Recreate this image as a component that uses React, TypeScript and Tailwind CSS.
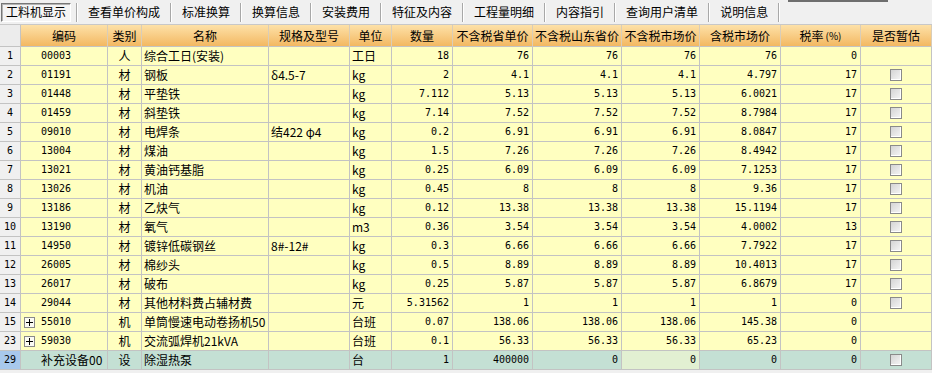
import type { ReactNode } from 'react'

type Row = {
  no: string
  code: string
  tree?: boolean
  kind: string
  name: string
  spec?: string
  unit: string
  qty: string
  p1: string
  p2: string
  p3: string
  p4: string
  rate: string
  check: boolean
  extra?: boolean
}

const tabs = ['工料机显示', '查看单价构成', '标准换算', '换算信息', '安装费用', '特征及内容', '工程量明细', '内容指引', '查询用户清单', '说明信息']

const headers = ['', '编码', '类别', '名称', '规格及型号', '单位', '数量', '不含税省单价', '不含税山东省价', '不含税市场价', '含税市场价', '税率(%)', '是否暂估']

const rows: Row[] = [
  { no: '1', code: '00003', kind: '人', name: '综合工日(安装)', unit: '工日', qty: '18', p1: '76', p2: '76', p3: '76', p4: '76', rate: '0', check: false },
  { no: '2', code: '01191', kind: '材', name: '钢板', spec: 'δ4.5-7', unit: 'kg', qty: '2', p1: '4.1', p2: '4.1', p3: '4.1', p4: '4.797', rate: '17', check: true },
  { no: '3', code: '01448', kind: '材', name: '平垫铁', unit: 'kg', qty: '7.112', p1: '5.13', p2: '5.13', p3: '5.13', p4: '6.0021', rate: '17', check: true },
  { no: '4', code: '01459', kind: '材', name: '斜垫铁', unit: 'kg', qty: '7.14', p1: '7.52', p2: '7.52', p3: '7.52', p4: '8.7984', rate: '17', check: true },
  { no: '5', code: '09010', kind: '材', name: '电焊条', spec: '结422 φ4', unit: 'kg', qty: '0.2', p1: '6.91', p2: '6.91', p3: '6.91', p4: '8.0847', rate: '17', check: true },
  { no: '6', code: '13004', kind: '材', name: '煤油', unit: 'kg', qty: '1.5', p1: '7.26', p2: '7.26', p3: '7.26', p4: '8.4942', rate: '17', check: true },
  { no: '7', code: '13021', kind: '材', name: '黄油钙基脂', unit: 'kg', qty: '0.25', p1: '6.09', p2: '6.09', p3: '6.09', p4: '7.1253', rate: '17', check: true },
  { no: '8', code: '13026', kind: '材', name: '机油', unit: 'kg', qty: '0.45', p1: '8', p2: '8', p3: '8', p4: '9.36', rate: '17', check: true },
  { no: '9', code: '13186', kind: '材', name: '乙炔气', unit: 'kg', qty: '0.12', p1: '13.38', p2: '13.38', p3: '13.38', p4: '15.1194', rate: '17', check: true },
  { no: '10', code: '13190', kind: '材', name: '氧气', unit: 'm3', qty: '0.36', p1: '3.54', p2: '3.54', p3: '3.54', p4: '4.0002', rate: '13', check: true },
  { no: '11', code: '14950', kind: '材', name: '镀锌低碳钢丝', spec: '8#-12#', unit: 'kg', qty: '0.3', p1: '6.66', p2: '6.66', p3: '6.66', p4: '7.7922', rate: '17', check: true },
  { no: '12', code: '26005', kind: '材', name: '棉纱头', unit: 'kg', qty: '0.5', p1: '8.89', p2: '8.89', p3: '8.89', p4: '10.4013', rate: '17', check: true },
  { no: '13', code: '26017', kind: '材', name: '破布', unit: 'kg', qty: '0.25', p1: '5.87', p2: '5.87', p3: '5.87', p4: '6.8679', rate: '17', check: true },
  { no: '14', code: '29044', kind: '材', name: '其他材料费占辅材费', unit: '元', qty: '5.31562', p1: '1', p2: '1', p3: '1', p4: '1', rate: '0', check: true },
  { no: '15', code: '55010', tree: true, kind: '机', name: '单筒慢速电动卷扬机50', unit: '台班', qty: '0.07', p1: '138.06', p2: '138.06', p3: '138.06', p4: '145.38', rate: '0', check: false },
  { no: '23', code: '59030', tree: true, kind: '机', name: '交流弧焊机21kVA', unit: '台班', qty: '0.1', p1: '56.33', p2: '56.33', p3: '56.33', p4: '65.23', rate: '0', check: false },
  { no: '29', code: '补充设备00', kind: '设', name: '除湿热泵', unit: '台', qty: '1', p1: '400000', p2: '0', p3: '0', p4: '0', rate: '0', check: true, extra: true },
]

const cols = 'grid grid-cols-[21px_87px_34px_127px_81px_42px_61px_80px_89px_78px_81px_80px_71px]'
const cjk = "font-['Noto_Sans_CJK_SC',sans-serif] text-[12px]"
const mono = "font-['DejaVu_Sans_Mono',monospace] text-[10px]"

function Cell({ className, children }: { className?: string; children?: ReactNode }) {
  return (
    <div className={`flex h-[19px] items-center overflow-hidden whitespace-nowrap border-b border-r border-[#c3c3c3] leading-none text-black ${className ?? ''}`}>
      {children}
    </div>
  )
}

function Num({ value, bg }: { value: string; bg: string }) {
  return <Cell className={`justify-end pr-[3px] ${mono} ${bg}`}>{value}</Cell>
}

function CheckBox() {
  return (
    <span className="block h-[12px] w-[12px] border border-[#8a8a8a] bg-[linear-gradient(135deg,#d4d4d4,#f6f6f6)] shadow-[inset_-1px_-1px_0_#ffffff]" />
  )
}

function TreeBox() {
  return (
    <span className="relative mr-[6px] block h-[11px] w-[11px] border border-[#8a8a8a] bg-[#fbfbf4]">
      <span className="absolute left-[1px] top-[4px] h-[1px] w-[7px] bg-black" />
      <span className="absolute left-[4px] top-[1px] h-[7px] w-[1px] bg-black" />
    </span>
  )
}

export default function App() {
  return (
    <div className="relative h-[373px] w-[932px] overflow-hidden bg-[#f0f0f0]">
      {/* tab strip */}
      <div className={`flex h-[25px] items-center border-b border-[#c8c8c8] ${cjk}`}>
        {tabs.map((t, i) => (
          <div key={t} className="flex h-full items-center">
            {i === 0 ? (
              <div className="ml-[1px] mr-[5px] flex h-[19px] w-[70px] items-center justify-center border border-b-white border-l-[#777] border-r-white border-t-[#777] bg-[#f4f4f4] shadow-[inset_1px_1px_0_#b4b4b4]">
                {t}
              </div>
            ) : (
              <div className="pl-[10px] pr-[10px]">{t}</div>
            )}
            <span className="h-[19px] w-[2px] border-l border-r border-l-[#a8a8a8] border-r-white" />
          </div>
        ))}
        <span className="absolute left-[788px] top-0 h-[2px] w-[100px] bg-[#6e6e6e]" />
      </div>

      {/* header */}
      <div className={`${cols} ${cjk}`}>
        {headers.map((h, i) =>
          i === 0 ? (
            <div key={i} className="h-[22px] border-b border-r border-[#c3c3c3] bg-[#ececec]" />
          ) : (
            <div
              key={i}
              className="flex h-[22px] items-center justify-center whitespace-nowrap border-b border-r border-b-[#c3c3c3] border-r-[#d9cdb8] bg-[linear-gradient(#fde1a8,#f3b862)]"
            >
              {h === '税率(%)' ? (
                <>
                  税率<span className="ml-[2px] text-[10px]">(%)</span>
                </>
              ) : (
                h
              )}
            </div>
          ),
        )}
      </div>

      {/* body */}
      {rows.map((r) => {
        const bg = r.extra ? 'bg-[#c4e0d4]' : 'bg-[#ffffc0]'
        return (
          <div key={r.no} className={cols}>
            <Cell className={`justify-center ${mono} ${r.extra ? 'bg-[#a8c8ec]' : 'bg-[#f0f0f0]'}`}>{r.no}</Cell>
            <Cell className={`${r.tree ? 'pl-[3px]' : 'pl-[20px]'} ${r.extra ? cjk : mono} ${bg}`}>
              {r.tree ? <TreeBox /> : null}
              {r.code}
            </Cell>
            <Cell className={`justify-center ${cjk} ${bg}`}>{r.kind}</Cell>
            <Cell className={`pl-[2px] ${cjk} ${bg}`}>{r.name}</Cell>
            <Cell className={`pl-[2px] ${cjk} ${bg}`}>{r.spec}</Cell>
            <Cell className={`pl-[2px] ${cjk} ${bg}`}>{r.unit}</Cell>
            <Num value={r.qty} bg={bg} />
            <Num value={r.p1} bg={bg} />
            <Num value={r.p2} bg={bg} />
            <Num value={r.p3} bg={r.extra ? 'bg-[#e2f0d2]' : bg} />
            <Num value={r.p4} bg={bg} />
            <Num value={r.rate} bg={bg} />
            <Cell className={`justify-center ${bg}`}>{r.check ? <CheckBox /> : null}</Cell>
          </div>
        )
      })}
    </div>
  )
}
